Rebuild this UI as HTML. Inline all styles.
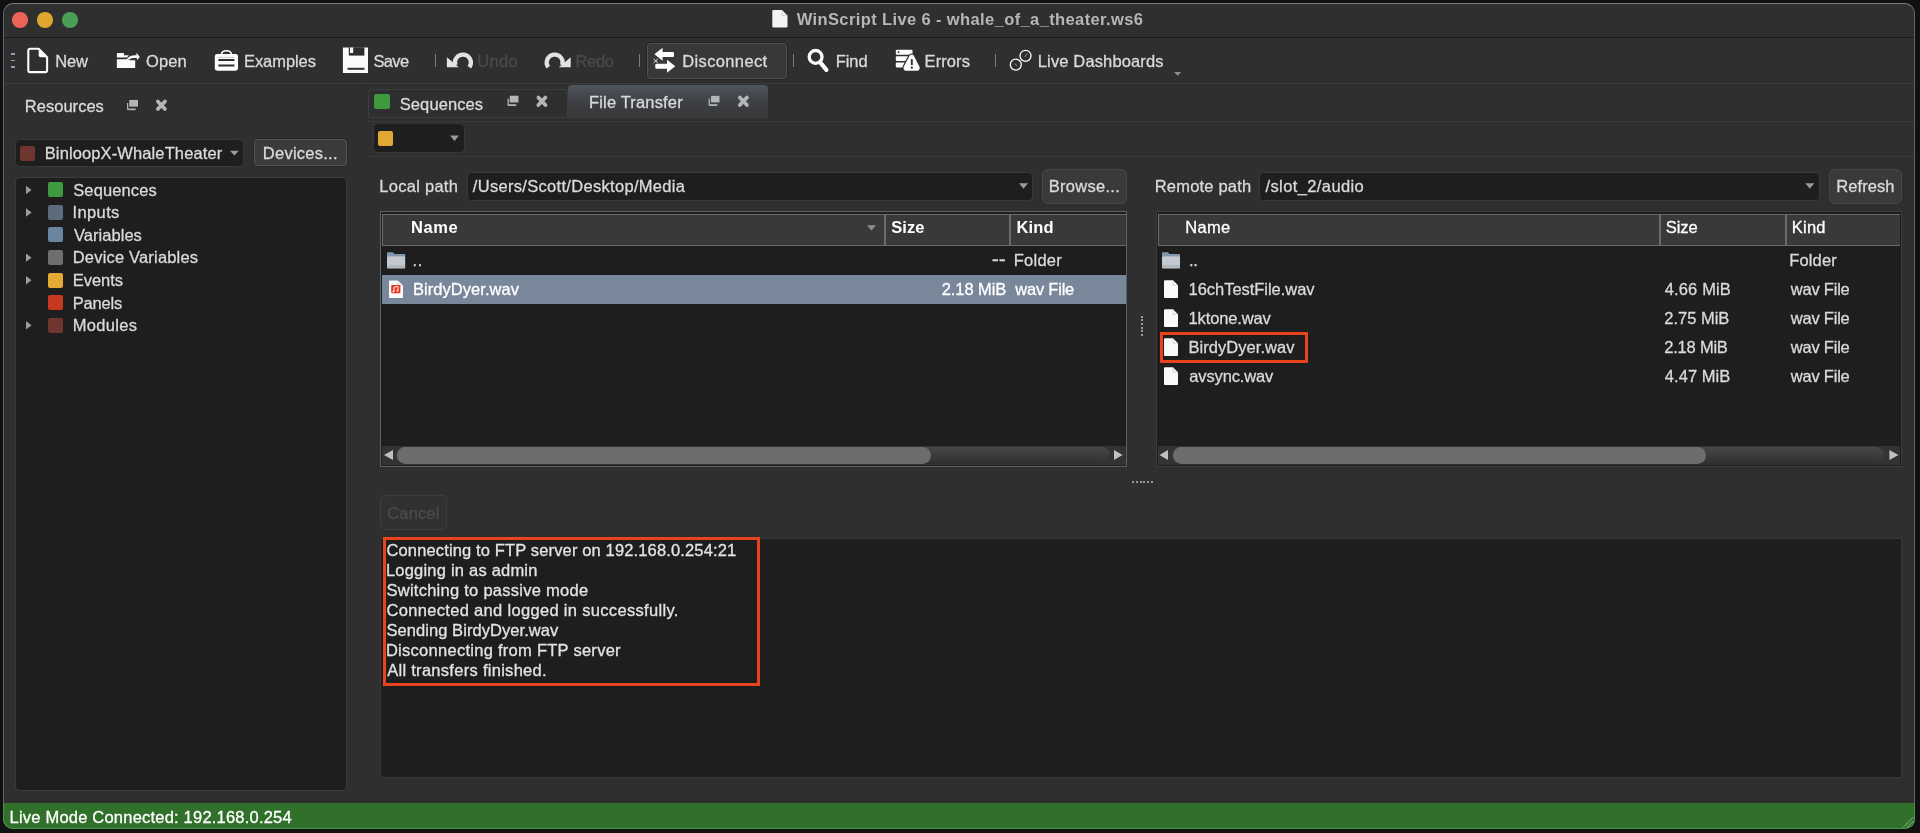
<!DOCTYPE html>
<html><head><meta charset="utf-8"><title>WinScript Live 6 - whale_of_a_theater.ws6</title>
<style>
*{box-sizing:border-box;margin:0;padding:0}
html,body{width:1920px;height:833px;overflow:hidden;background:#111}
body{font-family:"Liberation Sans",sans-serif;font-size:16.5px;color:#d9dadb;position:relative}
.a{position:absolute}
.t{position:absolute;white-space:nowrap;line-height:20px;height:20px;will-change:transform;-webkit-text-stroke:0.3px}
#win{left:3px;top:3px;width:1912px;height:826px;background:#2f2f2f;border:1px solid #5c6670;border-top-color:#7c7c7c;border-radius:10px;overflow:hidden}
.dark{background:#1e1e1e}
.dis{color:#4a4a4a}
.b{font-weight:bold;-webkit-text-stroke:0}
.hd{background:#393939;border:1px solid #6a6a6a}
.sq{border-radius:2px;width:15px;height:15px}
svg{position:absolute;left:0;top:0;overflow:visible}
</style></head><body>
<div id="win" class="a"></div>
<div id="titlebar">
<div class="a " style="left:4px;top:37px;width:1910px;height:1.3px;background:#1a1a1a"></div>
<div class="a " style="left:12.3px;top:12.3px;width:15.6px;height:15.6px;border-radius:50%;background:#ec6459"></div>
<div class="a " style="left:37.3px;top:12.3px;width:15.6px;height:15.6px;border-radius:50%;background:#e0a630"></div>
<div class="a " style="left:62.3px;top:12.3px;width:15.6px;height:15.6px;border-radius:50%;background:#47a053"></div>
<div class="t b" style="left:796px;top:8.83px;text-indent:0.75px;letter-spacing:0.381px;color:#b6b6b6">WinScript Live 6 - whale_of_a_theater.ws6</div>
</div>
<div id="toolbar">
<div class="a " style="left:4px;top:83px;width:1910px;height:1px;background:#3b3b3b"></div>
<div class="a " style="left:647px;top:42.6px;width:140px;height:36.4px;background:#383838;border:1px solid #4e5052;border-radius:3.5px;box-shadow:0 0 0 0.7px #232323"></div>
<div class="a " style="left:434.5px;top:53.5px;width:1.3px;height:13.5px;background:#7a7f86"></div>
<div class="a " style="left:639px;top:53.5px;width:1.3px;height:13.5px;background:#7a7f86"></div>
<div class="a " style="left:792.5px;top:53.5px;width:1.3px;height:13.5px;background:#7a7f86"></div>
<div class="a " style="left:995px;top:53.5px;width:1.3px;height:13.5px;background:#6d8096"></div>
<div class="a " style="left:10.6px;top:52.95px;width:4.4px;height:1.6px;background:#8e9fb8"></div>
<div class="a " style="left:10.6px;top:59.6px;width:4.4px;height:1.6px;background:#8e9fb8"></div>
<div class="a " style="left:10.6px;top:66.1px;width:4.4px;height:1.6px;background:#8e9fb8"></div>
<div class="t " style="left:55px;top:51.23px;text-indent:0.25px;letter-spacing:-0.125px;">New</div>
<div class="t " style="left:146px;top:51.23px;text-indent:0.00px;letter-spacing:0.083px;">Open</div>
<div class="t " style="left:244px;top:51.23px;text-indent:0.00px;letter-spacing:-0.071px;">Examples</div>
<div class="t " style="left:373px;top:51.23px;text-indent:0.50px;letter-spacing:-0.667px;">Save</div>
<div class="t dis" style="left:477px;top:51.23px;text-indent:0.25px;letter-spacing:0.333px;">Undo</div>
<div class="t dis" style="left:575px;top:51.23px;text-indent:0.50px;letter-spacing:-0.333px;">Redo</div>
<div class="t " style="left:682px;top:51.23px;text-indent:0.25px;letter-spacing:0.361px;">Disconnect</div>
<div class="t " style="left:835px;top:51.23px;text-indent:0.75px;letter-spacing:-0.083px;">Find</div>
<div class="t " style="left:924px;top:51.23px;text-indent:0.55px;letter-spacing:0.090px;">Errors</div>
<div class="t " style="left:1037px;top:51.23px;text-indent:0.75px;letter-spacing:0.143px;">Live Dashboards</div>
</div>
<div id="resources">
<div class="t " style="left:24px;top:95.98px;text-indent:0.75px;letter-spacing:0.031px;">Resources</div>
<div class="a dark" style="left:14.5px;top:138.6px;width:229.5px;height:28.6px;border-radius:4.5px;border:1px solid #383838"></div>
<div class="a sq" style="left:20px;top:146px;width:15px;height:15px;background:#6f3630"></div>
<div class="t " style="left:44px;top:143.33px;text-indent:0.75px;letter-spacing:0.113px;">BinloopX-WhaleTheater</div>
<div class="a " style="left:254px;top:139.2px;width:92.8px;height:27px;background:#3b3b3b;border:1px solid #515960;border-radius:3.5px;box-shadow:0 0 0 0.7px #242424"></div>
<div class="t " style="left:262px;top:143.33px;text-indent:0.85px;letter-spacing:0.250px;">Devices...</div>
<div class="a dark" style="left:14.5px;top:177px;width:332.5px;height:614px;border-radius:4px;border:1px solid #3a3a3a"></div>
<div class="a sq" style="left:48px;top:182.3px;width:15px;height:15px;background:#3f9a3f"></div>
<div class="t " style="left:73px;top:179.83px;text-indent:0.25px;letter-spacing:0.119px;">Sequences</div>
<div class="a sq" style="left:48px;top:204.85px;width:15px;height:15px;background:#5d6c7d"></div>
<div class="t " style="left:72px;top:202.38px;text-indent:0.50px;letter-spacing:0.380px;">Inputs</div>
<div class="a sq" style="left:48px;top:227.4px;width:15px;height:15px;background:#6b859f"></div>
<div class="t " style="left:74px;top:224.93px;text-indent:0.00px;letter-spacing:0.038px;">Variables</div>
<div class="a sq" style="left:48px;top:249.95px;width:15px;height:15px;background:#6e6e6e"></div>
<div class="t " style="left:72px;top:247.48px;text-indent:0.75px;letter-spacing:0.183px;">Device Variables</div>
<div class="a sq" style="left:48px;top:272.5px;width:15px;height:15px;background:#e4aa34"></div>
<div class="t " style="left:72px;top:270.03px;text-indent:0.75px;letter-spacing:-0.050px;">Events</div>
<div class="a sq" style="left:48px;top:295.05px;width:15px;height:15px;background:#c7391e"></div>
<div class="t " style="left:72px;top:292.58px;text-indent:0.75px;letter-spacing:-0.170px;">Panels</div>
<div class="a sq" style="left:48px;top:317.6px;width:15px;height:15px;background:#6f3630"></div>
<div class="t " style="left:72px;top:315.13px;text-indent:0.75px;letter-spacing:0.333px;">Modules</div>
</div>
<div id="center">
<div class="a " style="left:366px;top:84px;width:1px;height:718px;border-left:1px dotted #262626"></div>
<div class="a " style="left:367.5px;top:88.5px;width:200px;height:29px;border:1px solid #3e3e3e;border-radius:4px 4px 0 0;background:#2f2f2f"></div>
<div class="a sq" style="left:374.2px;top:94px;width:15.8px;height:15px;background:#3f9a3f;width:15.8px"></div>
<div class="t " style="left:399px;top:93.98px;text-indent:0.75px;letter-spacing:0.094px;">Sequences</div>
<div class="a " style="left:567.5px;top:85px;width:200px;height:32.5px;border-radius:4px 4px 0 0;background:linear-gradient(#50565d 0%,#484c52 22%,#3f4145 50%,#3a3b3d 75%,#38393a 100%)"></div>
<div class="t " style="left:589px;top:91.98px;text-indent:0.00px;letter-spacing:0.167px;">File Transfer</div>
<div class="a " style="left:368px;top:121px;width:1546px;height:1px;background:#393939"></div>
<div class="a " style="left:368px;top:156px;width:1546px;height:1px;background:#393939"></div>
<div class="a dark" style="left:372.5px;top:123.4px;width:92px;height:29.2px;border-radius:4.5px;border:1px solid #383838"></div>
<div class="a sq" style="left:378px;top:130.75px;width:15px;height:15px;background:#e0a832"></div>
<div class="t " style="left:379px;top:175.83px;text-indent:0.25px;letter-spacing:0.278px;">Local path</div>
<div class="a dark" style="left:467px;top:171.5px;width:566px;height:29px;border-radius:4px;border:1px solid #3a3a3a"></div>
<div class="t " style="left:472px;top:175.83px;text-indent:0.80px;letter-spacing:0.308px;">/Users/Scott/Desktop/Media</div>
<div class="a " style="left:1042px;top:169px;width:85px;height:34.5px;background:#3a3a3a;border:1px solid #484848;border-radius:6px"></div>
<div class="t " style="left:1048px;top:175.83px;text-indent:0.75px;letter-spacing:0.281px;">Browse...</div>
<div class="t " style="left:1154px;top:175.83px;text-indent:0.75px;letter-spacing:0.195px;">Remote path</div>
<div class="a dark" style="left:1259px;top:171.5px;width:561px;height:29px;border-radius:4px;border:1px solid #3a3a3a"></div>
<div class="t " style="left:1265px;top:175.83px;text-indent:0.50px;letter-spacing:0.392px;">/slot_2/audio</div>
<div class="a " style="left:1829px;top:168.5px;width:73px;height:35px;background:#3a3a3a;border:1px solid #484848;border-radius:6px"></div>
<div class="t " style="left:1836px;top:175.83px;text-indent:0.25px;letter-spacing:0.083px;">Refresh</div>
<div class="a dark" style="left:379.5px;top:211px;width:747.5px;height:256px;border:1px solid #58626d"></div>
<div class="a hd" style="left:382px;top:214px;width:503px;height:31.5px;"></div>
<div class="a hd" style="left:885px;top:214px;width:125px;height:31.5px;"></div>
<div class="a hd" style="left:1010px;top:214px;width:115.5px;height:31.5px;border-right:none"></div>
<div class="t b" style="left:411px;top:216.73px;text-indent:0.10px;letter-spacing:0.533px;color:#fff">Name</div>
<div class="t b" style="left:891px;top:216.73px;text-indent:0.25px;letter-spacing:0.083px;color:#fff">Size</div>
<div class="t b" style="left:1016px;top:216.73px;text-indent:0.50px;letter-spacing:0.167px;color:#fff">Kind</div>
<div class="a " style="left:382px;top:275.3px;width:743.5px;height:28.6px;background:#79879b"></div>
<div class="t " style="left:412px;top:250.23px;text-indent:0.60px;letter-spacing:0.450px;">..</div>
<div class="t " style="left:991px;top:248.97px;text-indent:0.86px;letter-spacing:-0.227px;font-size:21px;">--</div>
<div class="t " style="left:1013px;top:250.23px;text-indent:0.75px;letter-spacing:0.250px;">Folder</div>
<div class="t " style="left:413px;top:278.83px;text-indent:0.00px;letter-spacing:0.042px;color:#fff">BirdyDyer.wav</div>
<div class="t " style="left:941px;top:278.83px;text-indent:0.75px;letter-spacing:-0.071px;color:#fff">2.18 MiB</div>
<div class="t " style="left:1015px;top:278.83px;text-indent:0.25px;letter-spacing:-0.214px;color:#fff">wav File</div>
<div class="a " style="left:382px;top:446px;width:743.5px;height:19px;background:#333"></div>
<div class="a " style="left:396px;top:447px;width:713.5px;height:17px;border-radius:8.5px;background:linear-gradient(#484848,#2f2f2f)"></div>
<div class="a " style="left:397px;top:447px;width:534px;height:17px;border-radius:8.5px;background:#6d6d6d"></div>
<div class="a dark" style="left:1155.5px;top:211px;width:746px;height:256px;border:1px solid #3c3c3c"></div>
<div class="a hd" style="left:1157.5px;top:214px;width:502px;height:31.5px;"></div>
<div class="a hd" style="left:1659.5px;top:214px;width:126px;height:31.5px;"></div>
<div class="a hd" style="left:1785.5px;top:214px;width:114px;height:31.5px;border-right:none"></div>
<div class="t " style="left:1185px;top:216.73px;text-indent:0.25px;letter-spacing:0.333px;color:#fff">Name</div>
<div class="t " style="left:1665px;top:216.73px;text-indent:0.75px;letter-spacing:-0.083px;color:#fff">Size</div>
<div class="t " style="left:1791px;top:216.73px;text-indent:0.75px;letter-spacing:0.250px;color:#fff">Kind</div>
<div class="t " style="left:1188px;top:250.23px;text-indent:0.90px;letter-spacing:-0.250px;">..</div>
<div class="t " style="left:1789px;top:250.23px;text-indent:0.25px;letter-spacing:0.150px;">Folder</div>
<div class="t " style="left:1188px;top:279.23px;text-indent:0.55px;letter-spacing:-0.037px;">16chTestFile.wav</div>
<div class="t " style="left:1664px;top:279.23px;text-indent:0.75px;letter-spacing:0.143px;">4.66 MiB</div>
<div class="t " style="left:1790px;top:279.23px;text-indent:0.75px;letter-spacing:-0.214px;">wav File</div>
<div class="t " style="left:1188px;top:308.23px;text-indent:0.55px;letter-spacing:-0.144px;">1ktone.wav</div>
<div class="t " style="left:1664px;top:308.23px;text-indent:0.25px;letter-spacing:0.000px;">2.75 MiB</div>
<div class="t " style="left:1790px;top:308.23px;text-indent:0.75px;letter-spacing:-0.214px;">wav File</div>
<div class="t " style="left:1188px;top:337.23px;text-indent:0.55px;letter-spacing:0.038px;">BirdyDyer.wav</div>
<div class="t " style="left:1664px;top:337.23px;text-indent:0.25px;letter-spacing:-0.214px;">2.18 MiB</div>
<div class="t " style="left:1790px;top:337.23px;text-indent:0.75px;letter-spacing:-0.214px;">wav File</div>
<div class="t " style="left:1189px;top:366.23px;text-indent:0.30px;letter-spacing:-0.144px;">avsync.wav</div>
<div class="t " style="left:1664px;top:366.23px;text-indent:0.75px;letter-spacing:0.071px;">4.47 MiB</div>
<div class="t " style="left:1790px;top:366.23px;text-indent:0.75px;letter-spacing:-0.214px;">wav File</div>
<div class="a " style="left:1160.1px;top:331.5px;width:148.3px;height:31.3px;border:3px solid #e8431c"></div>
<div class="a " style="left:1157.5px;top:446px;width:742.5px;height:19px;background:#333"></div>
<div class="a " style="left:1171.5px;top:447px;width:712.5px;height:17px;border-radius:8.5px;background:linear-gradient(#484848,#2f2f2f)"></div>
<div class="a " style="left:1172.5px;top:447px;width:533.5px;height:17px;border-radius:8.5px;background:#6d6d6d"></div>
<div class="a " style="left:1132.3px;top:480.5px;width:2px;height:2px;background:#9a9a9a"></div>
<div class="a " style="left:1136px;top:480.5px;width:2px;height:2px;background:#9a9a9a"></div>
<div class="a " style="left:1139.7px;top:480.5px;width:2px;height:2px;background:#9a9a9a"></div>
<div class="a " style="left:1143.4px;top:480.5px;width:2px;height:2px;background:#9a9a9a"></div>
<div class="a " style="left:1147.1px;top:480.5px;width:2px;height:2px;background:#9a9a9a"></div>
<div class="a " style="left:1150.8px;top:480.5px;width:2px;height:2px;background:#9a9a9a"></div>
<div class="a " style="left:1141.3px;top:315.5px;width:2px;height:2px;background:#9a9a9a"></div>
<div class="a " style="left:1141.3px;top:319.2px;width:2px;height:2px;background:#9a9a9a"></div>
<div class="a " style="left:1141.3px;top:322.9px;width:2px;height:2px;background:#9a9a9a"></div>
<div class="a " style="left:1141.3px;top:326.6px;width:2px;height:2px;background:#9a9a9a"></div>
<div class="a " style="left:1141.3px;top:330.3px;width:2px;height:2px;background:#9a9a9a"></div>
<div class="a " style="left:1141.3px;top:334px;width:2px;height:2px;background:#9a9a9a"></div>
<div class="a " style="left:380.25px;top:495.25px;width:66.75px;height:34.5px;border:1px solid #3d3d3d;border-radius:5px;background:#313131"></div>
<div class="t dis" style="left:387px;top:502.73px;text-indent:0.25px;letter-spacing:0.150px;">Cancel</div>
<div class="a dark" style="left:380px;top:537.8px;width:1521.5px;height:240px;border-radius:3px;border:1px solid #383838"></div>
<div class="t " style="left:386px;top:539.83px;text-indent:0.45px;letter-spacing:0.141px;color:#e3e3e3">Connecting to FTP server on 192.168.0.254:21</div>
<div class="t " style="left:385px;top:559.83px;text-indent:0.95px;letter-spacing:0.211px;color:#e3e3e3">Logging in as admin</div>
<div class="t " style="left:386px;top:579.83px;text-indent:0.45px;letter-spacing:0.263px;color:#e3e3e3">Switching to passive mode</div>
<div class="t " style="left:386px;top:599.83px;text-indent:0.45px;letter-spacing:0.321px;color:#e3e3e3">Connected and logged in successfully.</div>
<div class="t " style="left:386px;top:619.83px;text-indent:0.45px;letter-spacing:0.065px;color:#e3e3e3">Sending BirdyDyer.wav</div>
<div class="t " style="left:385px;top:639.83px;text-indent:0.95px;letter-spacing:0.270px;color:#e3e3e3">Disconnecting from FTP server</div>
<div class="t " style="left:387px;top:659.83px;text-indent:0.20px;letter-spacing:0.286px;color:#e3e3e3">All transfers finished.</div>
<div class="a " style="left:383px;top:537.3px;width:376.5px;height:148.8px;border:3px solid #e8431c"></div>
</div>
<div id="status">
<div class="a " style="left:3px;top:802.8px;width:1912px;height:26.2px;background:#31702a;border:1px solid #469645;border-top:none;border-radius:0 0 10px 10px"></div>
<div class="t " style="left:9px;top:806.93px;text-indent:0.55px;letter-spacing:0.209px;color:#fff">Live Mode Connected: 192.168.0.254</div>
</div>
<svg width="1920" height="833" viewBox="0 0 1920 833">
<g id="ic-title"><path d="M773.3 10H782L787.5 15.5V26.6Q787.5 27.6 786.5 27.6H773.3Q772.3 27.6 772.3 26.6V11Q772.3 10 773.3 10Z" fill="#f4f4f4"/><path d="M782 10.5V15.5H787" fill="none" stroke="#c9c9c9" stroke-width="0.8"/></g>
<g id="ic-new"><path d="M30 48.8H38.7L47.1 57.2V70.2Q47.1 72.1 45.2 72.1H30.2Q28.3 72.1 28.3 70.2V50.7Q28.3 48.8 30.2 48.8Z" fill="none" stroke="#fbfbfb" stroke-width="2.1" stroke-linejoin="round"/><path d="M38.7 48.8L47.1 57.2H40.7Q38.7 57.2 38.7 55.2Z" fill="#fbfbfb"/></g>
<g id="ic-open" fill="#fbfbfb"><path d="M116.85 53.8Q116.85 53 117.6 53H123.4Q124 53 124 53.6V55.2H128.8L127 57.5H116.85Z"/><path d="M116.85 59.2H128.4L129.6 60.3H135.2V67.4Q135.2 68 134.6 68H117.4Q116.85 68 116.85 67.4Z"/><path d="M126.4 59.8C128.3 56.6 131 55.2 136.4 55.2V52.8L139.9 57L136.9 60.3V58.1C133 57.9 131 58.4 129.6 59.4Z"/></g>
<g id="ic-examples"><path d="M221.3 54.6C221.8 49.4 231 49.4 231.5 54.6" fill="none" stroke="#fbfbfb" stroke-width="1.6"/><rect x="214.8" y="54" width="23.2" height="16.7" rx="2.4" fill="#fbfbfb"/><path d="M218.4 57.4H234.4" stroke="#8a8a8a" stroke-width="0.9" stroke-dasharray="1 1"/><path d="M218.4 60H234.4M218.4 65.6H234.4" stroke="#2f2f2f" stroke-width="2"/></g>
<g id="ic-save"><path d="M342.9 47.5H368V73H342.9Z" fill="#fbfbfb"/><path d="M348.8 47.3H364.4V55.6H348.8Z" fill="#2f2f2f"/><path d="M350 47.5H353.2V53H350Z" fill="#fbfbfb"/><path d="M347.5 67.8H364.4V69.8H347.5Z" fill="#2f2f2f"/></g>
<g id="ic-undo"><path d="M469.4 67.25A8 8 0 1 0 455.4 65.3" fill="none" stroke="#e2e2e2" stroke-width="4.2"/><path d="M446.9 57.3V67.3H458.8Z" fill="#e2e2e2"/></g>
<g id="ic-redo"><path d="M548.2 67.25A8 8 0 1 1 562.2 65.3" fill="none" stroke="#e2e2e2" stroke-width="4.2"/><path d="M570.7 57.3V67.3H558.8Z" fill="#e2e2e2"/></g>
<g id="ic-disc" fill="#fbfbfb"><path d="M654.4 54.3L662.6 47.7V51.9H673Q674 51.9 674 52.9V55.9Q674 56.9 673 56.9H662.6V60.8Z"/><path d="M675.3 66.3L667 59.8V63.8H656.3Q655.3 63.8 655.3 64.8V67.8Q655.3 68.8 656.3 68.8H667V72.8Z"/><path d="M653.6 58.9L657.8 62.9M657.8 58.9L653.6 62.9" stroke="#e8e8e8" stroke-width="1" fill="none"/></g>
<g id="ic-find"><circle cx="815.6" cy="56.9" r="6.4" fill="none" stroke="#fbfbfb" stroke-width="3.3"/><path d="M820.4 62.6L826.4 69.8" stroke="#fbfbfb" stroke-width="4.2" stroke-linecap="round"/></g>
<g id="ic-errors"><rect x="895.8" y="49.7" width="16.7" height="5" rx="1" fill="#fbfbfb"/><rect x="895.8" y="56.2" width="16.7" height="4.8" rx="1" fill="#fbfbfb"/><rect x="895.8" y="62.5" width="16.7" height="5" rx="1" fill="#fbfbfb"/><circle cx="898.6" cy="52.2" r="0.9" fill="#2f2f2f"/><path d="M911.8 54.6C913 54.6 913.6 55.4 914.2 56.4L919.2 66.2C920.4 68.6 919.2 70.8 916.6 70.8H906.6C904 70.8 902.8 68.6 904 66.2L909.2 56.4C909.8 55.4 910.6 54.6 911.8 54.6Z" fill="#fbfbfb" stroke="#2f2f2f" stroke-width="2.4" paint-order="stroke"/><path d="M911.8 59.2V65" stroke="#2f2f2f" stroke-width="1.9"/><circle cx="911.8" cy="67.7" r="1.15" fill="#2f2f2f"/></g>
<g id="ic-live" fill="none" stroke="#fbfbfb"><circle cx="1015.8" cy="64.6" r="5.5" stroke-width="1.3"/><circle cx="1025.5" cy="55.8" r="5.5" stroke-width="1.3"/><path d="M1024.6 57L1027.4 53.6M1015 63.6L1016.8 66" stroke-width="0.8" stroke="#aaa"/></g>
<path d="M1174 72H1181.3L1177.65 75.8Z" fill="#8c8c8c"/>
<g id="ic-dock">
<path d="M127.65 103V109.2H135.8" fill="none" stroke="#b0b6b6" stroke-width="1.3"/><rect x="128.3" y="109.1" width="6.9" height="1.1" fill="#b0b6b6"/><rect x="129.2" y="99.9" width="8.8" height="6.8" fill="#b0b6b6" stroke="rgba(34,34,34,0.85)" stroke-width="0.9" paint-order="stroke"/>
<path d="M157.85 101.45L164.95 108.95M164.95 101.45L157.85 108.95" stroke="#b4b7b5" stroke-width="3.7" stroke-linecap="round" fill="none"/>
<path d="M508.15 98.8V105H516.3" fill="none" stroke="#b0b6b6" stroke-width="1.3"/><rect x="508.8" y="104.9" width="6.9" height="1.1" fill="#b0b6b6"/><rect x="509.7" y="95.7" width="8.8" height="6.8" fill="#b0b6b6" stroke="rgba(34,34,34,0.85)" stroke-width="0.9" paint-order="stroke"/>
<path d="M538.35 97.55L545.45 105.05M545.45 97.55L538.35 105.05" stroke="#b4b7b5" stroke-width="3.7" stroke-linecap="round" fill="none"/>
<path d="M709.25 98.8V105H717.4" fill="none" stroke="#b0b6b6" stroke-width="1.3"/><rect x="709.9" y="104.9" width="6.9" height="1.1" fill="#b0b6b6"/><rect x="710.8" y="95.7" width="8.8" height="6.8" fill="#b0b6b6" stroke="rgba(34,34,34,0.85)" stroke-width="0.9" paint-order="stroke"/>
<path d="M739.85 97.55L746.95 105.05M746.95 97.55L739.85 105.05" stroke="#b4b7b5" stroke-width="3.7" stroke-linecap="round" fill="none"/>
</g>
<g id="ic-arrows">
<path d="M230 150.7H238.8L234.4 155.6Z" fill="#9a9a9a"/>
<path d="M450 135.6H459L454.5 141Z" fill="#9a9a9a"/>
<path d="M1019 183.3H1028L1023.5 188.8Z" fill="#9a9a9a"/>
<path d="M1805.3 183.3H1814.3L1809.8 188.8Z" fill="#9a9a9a"/>
<path d="M867 225.2H876L871.5 230.6Z" fill="#8e8e8e"/>
<path d="M26 185.8V194.2L31.6 190Z" fill="#9b9b9b"/>
<path d="M26 208.35V216.75L31.6 212.55Z" fill="#9b9b9b"/>
<path d="M26 253.45V261.85L31.6 257.65Z" fill="#9b9b9b"/>
<path d="M26 276V284.4L31.6 280.2Z" fill="#9b9b9b"/>
<path d="M26 321.1V329.5L31.6 325.3Z" fill="#9b9b9b"/>
<path d="M393 450V460L384 455Z" fill="#c0c0c0"/>
<path d="M1114 450V460L1122.6 455Z" fill="#c0c0c0"/>
<path d="M1168 450V460L1159.4 455Z" fill="#c0c0c0"/>
<path d="M1889.4 450V460L1898.4 455Z" fill="#c0c0c0"/>
</g>
<g id="ic-files">
<path d="M387 253.2Q387 252.2 388 252.2H393L394.5 254H405.2V256.7H387Z" fill="#8296b0"/><rect x="387" y="256.2" width="18.2" height="12.4" rx="1" fill="#c3c9ce"/><rect x="387.4" y="265.2" width="17.4" height="2.6" fill="#aeb7bd"/>
<path d="M390 280.4H398L403 285.4V296.9Q403 297.9 402 297.9H390Q389 297.9 389 296.9V281.4Q389 280.4 390 280.4Z" fill="#fafafa"/><path d="M398 280.9V285.4H402.5" fill="none" stroke="#c9c9c9" stroke-width="0.8"/>
<rect x="391.2" y="285" width="9.2" height="8.3" rx="1" fill="#e8371c"/><path d="M394 291.4V287.2L398 286.4V290.6" stroke="#fff" stroke-width="0.9" fill="none"/><circle cx="393.4" cy="291.4" r="0.9" fill="#fff"/><circle cx="397.4" cy="290.8" r="0.9" fill="#fff"/>
<path d="M1162 253.2Q1162 252.2 1163 252.2H1168L1169.5 254H1180V256.7H1162Z" fill="#8296b0"/><rect x="1162" y="256.2" width="18" height="12.2" rx="1" fill="#c3c9ce"/><rect x="1162.4" y="265" width="17.2" height="2.6" fill="#aeb7bd"/>
<path d="M1165 280.2H1173L1178 285.2V296.9Q1178 297.9 1177 297.9H1165Q1164 297.9 1164 296.9V281.2Q1164 280.2 1165 280.2Z" fill="#fafafa"/><path d="M1173 280.7V285.2H1177.5" fill="none" stroke="#c9c9c9" stroke-width="0.8"/>
<path d="M1165 309.2H1173L1178 314.2V325.9Q1178 326.9 1177 326.9H1165Q1164 326.9 1164 325.9V310.2Q1164 309.2 1165 309.2Z" fill="#fafafa"/><path d="M1173 309.7V314.2H1177.5" fill="none" stroke="#c9c9c9" stroke-width="0.8"/>
<path d="M1165 338.2H1173L1178 343.2V354.9Q1178 355.9 1177 355.9H1165Q1164 355.9 1164 354.9V339.2Q1164 338.2 1165 338.2Z" fill="#fafafa"/><path d="M1173 338.7V343.2H1177.5" fill="none" stroke="#c9c9c9" stroke-width="0.8"/>
<path d="M1165 367.2H1173L1178 372.2V383.9Q1178 384.9 1177 384.9H1165Q1164 384.9 1164 383.9V368.2Q1164 367.2 1165 367.2Z" fill="#fafafa"/><path d="M1173 367.7V372.2H1177.5" fill="none" stroke="#c9c9c9" stroke-width="0.8"/>
</g>
<path d="M1903 827.5L1913.5 817M1907 827.5L1913.5 821" stroke="#8fbf8a" stroke-width="0.9"/>
</svg>
</body></html>
